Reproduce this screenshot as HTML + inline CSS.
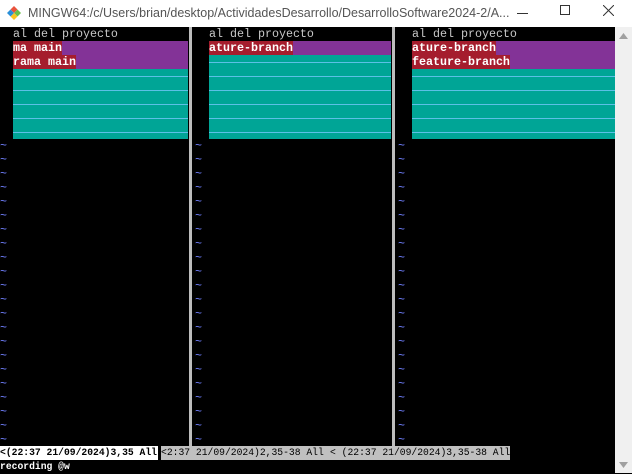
<!DOCTYPE html><html><head><style>
*{margin:0;padding:0;box-sizing:border-box}
body{width:632px;height:473px;background:#000;position:relative;overflow:hidden;font-family:"Liberation Mono",monospace;font-size:11.67px;line-height:14px}
.a{position:absolute}
.tb{left:0;top:0;width:632px;height:27px;background:#fff}
.title{left:28px;top:5px;font-family:"Liberation Sans",sans-serif;font-size:12.5px;color:#555;line-height:16px}
.sb{left:615px;top:27px;width:17px;height:446px;background:#f0f0f0}
.t{color:#c8c8c8;white-space:pre}
.pu{background:#833397}
.rd{background:#a51d2d;color:#fff;font-weight:bold;white-space:pre}
.te{background:#00a596}
.ln{height:1px;background:#5cc0e6}
.sep{width:3px;background:#bdbdbd}
.til{color:#7080ff;white-space:pre}
.st{font-size:9.7px;white-space:pre;height:14px;line-height:14px;overflow:hidden}
</style></head><body>
<div class="a tb"></div>
<svg class="a" style="left:6px;top:5px" width="16" height="16" viewBox="0 0 16 16">
<polygon points="8,1 11.5,4.5 8,8 4.5,4.5" fill="#e9533d"/>
<polygon points="11.5,4.5 15,8 11.5,11.5 8,8" fill="#6cc04a"/>
<polygon points="8,8 11.5,11.5 8,15 4.5,11.5" fill="#fcc521"/>
<polygon points="4.5,4.5 8,8 4.5,11.5 1,8" fill="#2a8fd8"/>
</svg>
<div class="a title">MINGW64:/c/Users/brian/desktop/ActividadesDesarrollo/DesarrolloSoftware2024-2/A...</div>
<div class="a" style="left:517px;top:13px;width:11px;height:1px;background:#333"></div>
<div class="a" style="left:560px;top:5px;width:10px;height:10px;border:1px solid #333"></div>
<svg class="a" style="left:603px;top:5px" width="11" height="11"><path d="M0 0L11 11M11 0L0 11" stroke="#333" stroke-width="1"/></svg>
<div class="a sb"></div>
<svg class="a" style="left:619px;top:33px" width="9" height="6"><polygon points="4.5,0 9,6 0,6" fill="#a0a0a0"/></svg>
<svg class="a" style="left:619px;top:462px" width="9" height="6"><polygon points="0,0 9,0 4.5,6" fill="#a0a0a0"/></svg>

<div class="a t" style="left:13px;top:27px">al del proyecto</div>
<div class="a pu" style="left:13px;top:41px;width:175px;height:28px"></div>
<div class="a rd" style="left:13px;top:41px">ma main</div>
<div class="a rd" style="left:13px;top:55px">rama main</div>
<div class="a te" style="left:13px;top:69px;width:175px;height:70px"></div>
<div class="a t" style="left:209px;top:27px">al del proyecto</div>
<div class="a pu" style="left:209px;top:41px;width:182px;height:14px"></div>
<div class="a rd" style="left:209px;top:41px">ature-branch</div>
<div class="a te" style="left:209px;top:55px;width:182px;height:84px"></div>
<div class="a t" style="left:412px;top:27px">al del proyecto</div>
<div class="a pu" style="left:412px;top:41px;width:203px;height:28px"></div>
<div class="a rd" style="left:412px;top:41px">ature-branch</div>
<div class="a rd" style="left:412px;top:55px">feature-branch</div>
<div class="a te" style="left:412px;top:69px;width:203px;height:70px"></div>

<div class="a ln" style="left:13px;top:76px;width:175px"></div>
<div class="a ln" style="left:13px;top:90px;width:175px"></div>
<div class="a ln" style="left:13px;top:104px;width:175px"></div>
<div class="a ln" style="left:13px;top:118px;width:175px"></div>
<div class="a ln" style="left:13px;top:132px;width:175px"></div>
<div class="a ln" style="left:209px;top:62px;width:182px"></div>
<div class="a ln" style="left:209px;top:76px;width:182px"></div>
<div class="a ln" style="left:209px;top:90px;width:182px"></div>
<div class="a ln" style="left:209px;top:104px;width:182px"></div>
<div class="a ln" style="left:209px;top:118px;width:182px"></div>
<div class="a ln" style="left:209px;top:132px;width:182px"></div>
<div class="a ln" style="left:412px;top:76px;width:203px"></div>
<div class="a ln" style="left:412px;top:90px;width:203px"></div>
<div class="a ln" style="left:412px;top:104px;width:203px"></div>
<div class="a ln" style="left:412px;top:118px;width:203px"></div>
<div class="a ln" style="left:412px;top:132px;width:203px"></div>

<div class="a sep" style="left:189px;top:27px;height:419px"></div>
<div class="a sep" style="left:392px;top:27px;height:419px"></div>

<div class="a til" style="left:0px;top:139px">~
~
~
~
~
~
~
~
~
~
~
~
~
~
~
~
~
~
~
~
~
~</div>
<div class="a til" style="left:195px;top:139px">~
~
~
~
~
~
~
~
~
~
~
~
~
~
~
~
~
~
~
~
~
~</div>
<div class="a til" style="left:398px;top:139px">~
~
~
~
~
~
~
~
~
~
~
~
~
~
~
~
~
~
~
~
~
~</div>

<div class="a st" style="left:0;top:446px;width:158px;background:#fff;color:#000;font-weight:bold">&lt;(22:37 21/09/2024)3,35 All</div>
<div class="a st" style="left:161px;top:446px;width:167px;background:#c0c0c0;color:#000">&lt;2:37 21/09/2024)2,35-38 All</div>
<div class="a st" style="left:328px;top:446px;width:182px;background:#c0c0c0;color:#000;padding-left:2px">&lt; (22:37 21/09/2024)3,35-38 All</div>
<div class="a st" style="left:0;top:460px;color:#fff;font-weight:bold">recording @w</div>
</body></html>
